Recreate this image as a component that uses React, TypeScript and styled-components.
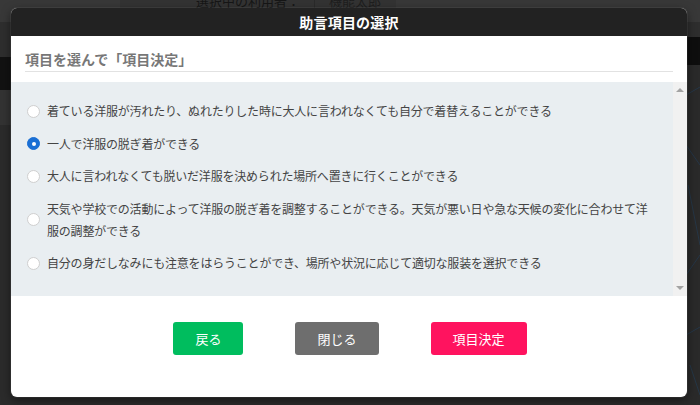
import React, { useState } from "react";
import styled, { createGlobalStyle } from "styled-components";

const GlobalStyle = createGlobalStyle`
  html, body {
    margin: 0;
    padding: 0;
    background: #2b2b2b;
  }
  body {
    font-family: "Noto Sans CJK JP", "Noto Sans", sans-serif;
  }
`;

const Page = styled.div`
  position: relative;
  width: 700px;
  height: 405px;
  overflow: hidden;
  background: #2b2b2b;
`;

const TopBar = styled.div`
  display: flex;
  height: 22px;
  background: #383838;
`;

const UserCard = styled.div`
  display: flex;
  align-items: flex-start;
  margin-left: 120px;
  width: 200px;
  background: #333;
  font-size: 13px;
  line-height: 16px;
  color: #161616;
  white-space: nowrap;
  padding-left: 76px;
  margin-top: -7px;
`;

const UserName = styled.span`
  margin-left: 14px;
  padding-left: 14px;
  border-left: 1px solid #2a2a2a;
  color: #1e1e1e;
`;

const Backdrop = styled.div`
  display: flex;
  justify-content: space-between;
  height: 383px;
`;

const Gutter = styled.div`
  display: flex;
  flex-direction: column;
  width: 14px;
`;

const Band = styled.div<{ h: number; bg: string }>`
  height: ${(p) => p.h}px;
  background: ${(p) => p.bg};
  flex-shrink: 0;
`;

const Lines = styled.svg`
  flex: 1;
  width: 14px;
  background: #2a2a2a;
`;

const Modal = styled.div`
  position: absolute;
  top: 8px;
  left: 11px;
  width: 676px;
  height: 389px;
  display: flex;
  flex-direction: column;
  background: #fff;
  border-radius: 6px;
  overflow: hidden;
  box-shadow: 0 0 0 1px rgba(255, 255, 255, 0.06), 0 3px 10px rgba(0, 0, 0, 0.5);
`;

const Header = styled.div`
  height: 28px;
  flex-shrink: 0;
  display: flex;
  align-items: center;
  justify-content: center;
  background: #222;
  color: #fff;
  font-size: 14px;
  font-weight: 700;
  letter-spacing: 0.2px;
`;

const Lead = styled.div`
  margin: 13px 14px 10px;
  padding-bottom: 2px;
  border-bottom: 1px solid #e2e2e2;
  font-size: 14px;
  line-height: 20px;
  font-weight: 700;
  color: #777;
`;

const ListBox = styled.div`
  display: flex;
  height: 214px;
  flex-shrink: 0;
  background: #e9eef1;
`;

const List = styled.div`
  flex: 1;
  display: flex;
  flex-direction: column;
  gap: 10.5px;
  padding: 18px 0 0 16px;
`;

const Item = styled.label`
  display: flex;
  align-items: center;
  gap: 7px;
  cursor: pointer;
`;

const Radio = styled.span<{ checked: boolean }>`
  width: 13px;
  height: 13px;
  flex-shrink: 0;
  box-sizing: border-box;
  border-radius: 50%;
  display: flex;
  align-items: center;
  justify-content: center;
  background: ${(p) => (p.checked ? "#1a6fd4" : "#fff")};
  border: 1px solid ${(p) => (p.checked ? "#1a6fd4" : "#cfcfcf")};

  &::after {
    content: "";
    width: 4px;
    height: 4px;
    border-radius: 50%;
    background: #fff;
    display: ${(p) => (p.checked ? "block" : "none")};
  }
`;

const Label = styled.span`
  width: 608px;
  font-size: 12px;
  line-height: 22px;
  letter-spacing: -0.2px;
  color: #444;
`;

const Scrollbar = styled.div`
  width: 14px;
  display: flex;
  flex-direction: column;
  justify-content: space-between;
  align-items: center;
  padding: 6px 0;
  background: #f1f1f1;
`;

const Arrow = styled.span<{ down?: boolean }>`
  width: 0;
  height: 0;
  border-left: 4px solid transparent;
  border-right: 4px solid transparent;
  ${(p) =>
    p.down
      ? "border-top: 4px solid #a3a3a3;"
      : "border-bottom: 4px solid #a3a3a3;"}
`;

const Actions = styled.div`
  display: flex;
  justify-content: center;
  gap: 52px;
  padding-top: 26px;
  padding-left: 2px;
`;

const Button = styled.button<{ color: string }>`
  height: 33px;
  padding: 0 22px;
  border: none;
  border-radius: 3px;
  background: ${(p) => p.color};
  color: #fff;
  font-family: inherit;
  font-size: 13px;
  cursor: pointer;
`;

const items = [
  "着ている洋服が汚れたり、ぬれたりした時に大人に言われなくても自分で着替えることができる",
  "一人で洋服の脱ぎ着ができる",
  "大人に言われなくても脱いだ洋服を決められた場所へ置きに行くことができる",
  "天気や学校での活動によって洋服の脱ぎ着を調整することができる。天気が悪い日や急な天候の変化に合わせて洋服の調整ができる",
  "自分の身だしなみにも注意をはらうことができ、場所や状況に応じて適切な服装を選択できる",
];

export default function App() {
  const [selected, setSelected] = useState(1);

  return (
    <Page>
      <GlobalStyle />
      <TopBar>
        <UserCard>
          選択中の利用者：<UserName>機能太郎</UserName>
        </UserCard>
      </TopBar>
      <Backdrop>
        <Gutter>
          <Band h={35} bg="#2e2e2e" />
          <Band h={33} bg="#121212" />
          <Band h={35} bg="#333" />
          <Band h={280} bg="#2b2b2b" />
        </Gutter>
        <Gutter>
          <Band h={15} bg="#2e2e2e" />
          <Band h={28} bg="#0e0e0e" />
          <Lines viewBox="0 0 14 340" preserveAspectRatio="none">
            <g stroke="#24405e" strokeWidth="0.7" fill="none" opacity="0.8">
              <path d="M0 30 L14 22" />
              <path d="M0 80 L14 100" />
              <path d="M2 120 L14 180" />
              <path d="M0 210 L14 190" />
              <path d="M0 270 L14 262" />
              <path d="M4 300 L14 330" />
            </g>
          </Lines>
        </Gutter>
      </Backdrop>

      <Modal>
        <Header>助言項目の選択</Header>
        <Lead>項目を選んで「項目決定」</Lead>
        <ListBox>
          <List>
            {items.map((text, i) => (
              <Item key={i} onClick={() => setSelected(i)}>
                <Radio checked={selected === i} />
                <Label>{text}</Label>
              </Item>
            ))}
          </List>
          <Scrollbar>
            <Arrow />
            <Arrow down />
          </Scrollbar>
        </ListBox>
        <Actions>
          <Button color="#00bd5e">戻る</Button>
          <Button color="#6e6e6e">閉じる</Button>
          <Button color="#ff135f">項目決定</Button>
        </Actions>
      </Modal>
    </Page>
  );
}
